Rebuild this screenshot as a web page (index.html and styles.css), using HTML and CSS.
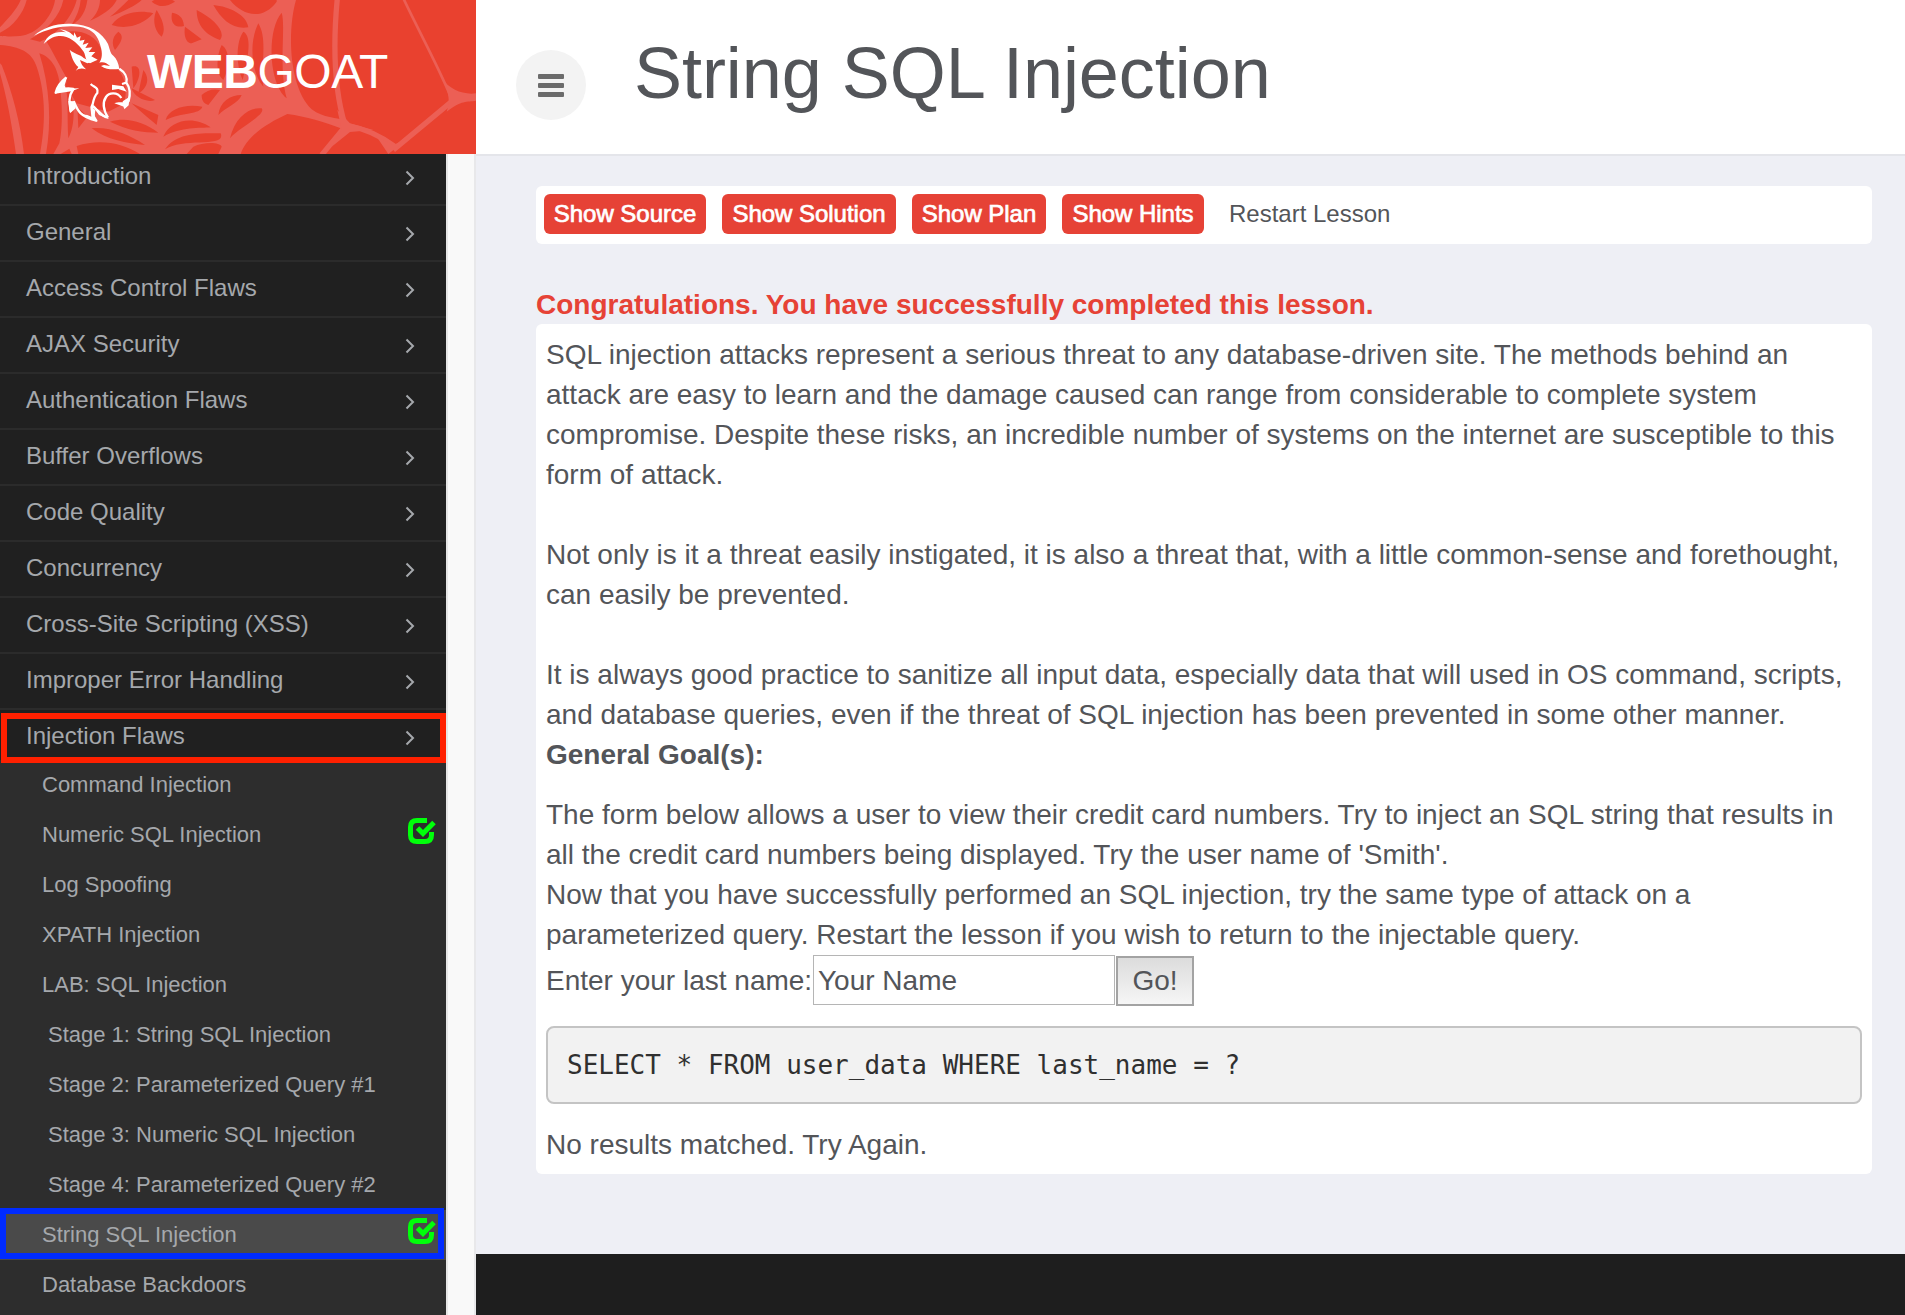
FILE: index.html
```html
<!DOCTYPE html>
<html lang="en">
<head>
<meta charset="utf-8">
<title>WebGoat - String SQL Injection</title>
<link rel="stylesheet" href="styles.css">
</head>
<body>
<div class="app">
  <header class="brand">
    <svg class="web" viewBox="0 0 1428 462" preserveAspectRatio="none" aria-hidden="true">
      <g class="strands">
        <path class="fill" d="M0 0H888C862 90 865 260 935 328C970 355 1010 352 1040 362L1030 388C970 365 920 350 862 342C800 370 740 410 722 462H0Z"/>
        <path class="strand" d="M1012 -5C1000 120 1000 260 1035 375C1090 385 1140 405 1185 440M1035 380L965 465M1180 450L1370 292"/>
        <path class="thin" d="M1210 -5C1260 100 1310 190 1350 285"/>
        <path class="fill" d="M1325 235C1350 270 1390 285 1428 280V302C1400 306 1385 300 1340 335C1350 310 1350 280 1325 235ZM1012 330L1050 370L1120 390L1050 396L995 440L1025 388ZM1130 410L1180 435L1225 415L1165 462Z"/>
      </g>
      <g class="holes">
        <path d="M0 0H62C50 30 20 60 0 82ZM80 0H165C158 50 110 104 60 108C30 111 0 108 0 108V98C40 80 70 40 80 0ZM190 0H230C215 60 160 110 120 125L90 118C140 90 180 50 190 0ZM242 0H262C258 30 245 60 215 74C230 50 240 25 242 0ZM300 0H350C340 25 300 50 270 62C290 45 300 20 300 0ZM385 0H425C410 15 370 35 330 50C350 35 370 15 385 0Z"/>
        <path d="M0 220C20 290 35 370 48 462H0ZM0 135C60 140 95 155 110 200C140 290 135 380 120 462H72C62 370 35 270 5 195L0 190ZM118 160C150 170 175 200 180 260C190 340 185 400 178 430L160 462H138C155 370 150 260 118 160ZM192 235C232 300 225 380 205 415C200 350 208 290 192 235ZM232 320L262 350L235 385ZM182 462L208 446L215 462Z"/>
        <path d="M135 118C200 80 280 85 305 150L350 205C385 240 380 290 370 312L325 335L230 310L205 270L195 225C170 180 150 140 135 118Z"/>
        <path d="M335 75C365 35 420 30 460 40C430 75 380 90 335 75ZM345 150C370 120 370 105 355 95C335 110 335 135 345 150ZM455 5C480 25 500 20 525 5C510 -8 470 -8 455 5ZM470 30C455 60 465 95 485 110C500 85 485 55 470 30ZM516 38C510 70 525 85 552 78C550 50 535 42 516 38ZM590 30C590 80 620 105 660 120C680 95 640 55 590 30ZM640 15C665 60 700 90 745 82C740 45 690 20 640 15ZM690 0C730 50 790 60 830 5V0ZM555 80C550 110 560 130 575 130L605 118Z"/>
        <path d="M665 135C690 150 690 200 670 240C645 220 650 165 665 135ZM730 95C760 110 740 190 728 240C705 190 710 120 730 95ZM775 70C805 120 780 200 790 260C755 220 745 130 775 70ZM845 38C858 80 835 200 860 295C805 250 800 90 845 38ZM395 200C430 190 420 240 400 265ZM430 210C455 240 435 270 415 280Z"/>
        <path d="M497 360C505 325 560 310 607 320C600 345 545 335 497 360ZM490 410C510 360 580 345 632 382C600 385 545 380 490 410ZM495 448C530 395 610 400 662 400C680 445 550 410 495 448ZM605 285C620 270 640 265 660 270L625 315C610 310 605 300 605 285ZM655 345C660 305 690 285 725 285C715 310 680 320 655 345ZM690 415C705 350 750 320 785 325C800 345 720 380 690 415Z"/>
        <path d="M395 310L475 345L470 375C440 350 410 325 395 310ZM330 365C380 350 430 365 475 398C430 398 380 390 330 365ZM275 385C330 380 390 405 435 435C380 430 320 420 275 385ZM230 438C300 415 370 430 420 462H235ZM395 265L465 300C440 310 400 290 395 265ZM580 440C610 425 660 425 665 440L655 462H560Z"/>
      </g>
      <g class="goat">
        <path d="M102 107C128 84 165 70 210 71C268 72 308 98 324 132C331 151 330 160 340 167C350 176 356 190 358 207C342 208 322 211 303 198L312 195L330 198C320 190 312 184 298 188C307 174 307 160 303 143C296 113 285 96 260 86C222 72 158 78 102 107Z"/>
        <path d="M131 132C142 104 166 92 198 97L180 88C202 90 216 102 221 108L223 97L231 113L242 108L239 122L254 119L248 134L266 128L256 144L277 142L266 156L286 156L274 169L293 179L270 190C252 180 260 164 247 150C228 122 198 103 171 109C151 113 142 123 131 132Z"/>
        <path d="M209 149C222 162 241 163 251 174L275 186L262 190L240 180C243 191 248 199 258 208C246 204 236 205 227 213L235 201C220 188 215 170 209 149Z"/>
        <path class="line" d="M358 206C374 216 383 232 379 248L366 252M379 248C391 264 391 284 386 303L375 312L374 323M364 294C352 275 327 277 318 291C306 309 312 333 324 353M199 232C184 244 171 258 167 278C181 268 199 263 220 267C203 292 209 313 212 335M221 304C233 332 240 350 289 362C275 343 275 329 276 316C292 326 298 349 324 353M272 252C283 263 296 262 292 279C281 290 280 303 276 322"/>
        <path d="M165 281L180 250L202 230L194 256L197 266L238 265L214 274ZM210 340L205 303L223 304L227 325ZM290 365L243 343L262 345L274 350L271 318L286 330L284 348ZM328 357L297 345L279 317L299 332L312 345ZM373 328L368 304L389 290L386 316ZM336 254L370 259L380 275L355 267L336 270ZM343 310C358 303 367 309 379 306L372 320Z"/>
      </g>
    </svg>
    <h2 class="wordmark"><b>WEB</b><span>GOAT</span></h2>
  </header>

  <header class="topbar">
    <button class="toggle" aria-label="Toggle menu"><i></i><i></i><i></i></button>
    <h1>String SQL Injection</h1>
  </header>

  <nav class="sidebar">
    <ul class="menu">
      <li><a>Introduction<svg class="chev" viewBox="0 0 10 16"><path d="M1.5 1.5L8 8L1.5 14.5"/></svg></a></li>
      <li><a>General<svg class="chev" viewBox="0 0 10 16"><path d="M1.5 1.5L8 8L1.5 14.5"/></svg></a></li>
      <li><a>Access Control Flaws<svg class="chev" viewBox="0 0 10 16"><path d="M1.5 1.5L8 8L1.5 14.5"/></svg></a></li>
      <li><a>AJAX Security<svg class="chev" viewBox="0 0 10 16"><path d="M1.5 1.5L8 8L1.5 14.5"/></svg></a></li>
      <li><a>Authentication Flaws<svg class="chev" viewBox="0 0 10 16"><path d="M1.5 1.5L8 8L1.5 14.5"/></svg></a></li>
      <li><a>Buffer Overflows<svg class="chev" viewBox="0 0 10 16"><path d="M1.5 1.5L8 8L1.5 14.5"/></svg></a></li>
      <li><a>Code Quality<svg class="chev" viewBox="0 0 10 16"><path d="M1.5 1.5L8 8L1.5 14.5"/></svg></a></li>
      <li><a>Concurrency<svg class="chev" viewBox="0 0 10 16"><path d="M1.5 1.5L8 8L1.5 14.5"/></svg></a></li>
      <li><a>Cross-Site Scripting (XSS)<svg class="chev" viewBox="0 0 10 16"><path d="M1.5 1.5L8 8L1.5 14.5"/></svg></a></li>
      <li><a>Improper Error Handling<svg class="chev" viewBox="0 0 10 16"><path d="M1.5 1.5L8 8L1.5 14.5"/></svg></a></li>
      <li class="open"><a>Injection Flaws<svg class="chev" viewBox="0 0 10 16"><path d="M1.5 1.5L8 8L1.5 14.5"/></svg></a></li>
    </ul>
    <ul class="lessons">
      <li>Command Injection</li>
      <li>Numeric SQL Injection<svg class="done" viewBox="0 0 28 27"><path d="M19 2.5H9Q2.5 2.5 2.5 9V17Q2.5 23.5 9 23.5H17Q23.5 23.5 23.5 17V14"/><path d="M9.5 10L15 15.5L26 4.5"/></svg></li>
      <li>Log Spoofing</li>
      <li>XPATH Injection</li>
      <li>LAB: SQL Injection</li>
      <li class="stage">Stage 1: String SQL Injection</li>
      <li class="stage">Stage 2: Parameterized Query #1</li>
      <li class="stage">Stage 3: Numeric SQL Injection</li>
      <li class="stage">Stage 4: Parameterized Query #2</li>
      <li class="current">String SQL Injection<svg class="done" viewBox="0 0 28 27"><path d="M19 2.5H9Q2.5 2.5 2.5 9V17Q2.5 23.5 9 23.5H17Q23.5 23.5 23.5 17V14"/><path d="M9.5 10L15 15.5L26 4.5"/></svg></li>
      <li>Database Backdoors</li>
    </ul>
  </nav>

  <main class="content">
    <div class="toolbar">
      <button>Show Source</button>
      <button>Show Solution</button>
      <button>Show Plan</button>
      <button>Show Hints</button>
      <a>Restart Lesson</a>
    </div>
    <div class="feedback">Congratulations. You have successfully completed this lesson.</div>
    <section class="lesson">
      <p>SQL injection attacks represent a serious threat to any database-driven site. The methods behind an<br>attack are easy to learn and the damage caused can range from considerable to complete system<br>compromise. Despite these risks, an incredible number of systems on the internet are susceptible to this<br>form of attack.<br><br>Not only is it a threat easily instigated, it is also a threat that, with a little common-sense and forethought,<br>can easily be prevented.<br><br>It is always good practice to sanitize all input data, especially data that will used in OS command, scripts,<br>and database queries, even if the threat of SQL injection has been prevented in some other manner.<br><b>General Goal(s):</b></p>
      <p class="goal">The form below allows a user to view their credit card numbers. Try to inject an SQL string that results in<br>all the credit card numbers being displayed. Try the user name of 'Smith'.<br>Now that you have successfully performed an SQL injection, try the same type of attack on a<br>parameterized query. Restart the lesson if you wish to return to the injectable query.</p>
      <form class="query">
        <label for="name">Enter your last name:</label><input id="name" type="text" value="Your Name"><button type="button">Go!</button>
      </form>
      <pre>SELECT * FROM user_data WHERE last_name = ?</pre>
      <p class="result">No results matched. Try Again.</p>
    </section>
  </main>

  <footer class="footer"></footer>
</div>
</body>
</html>
```
FILE: styles.css
```css
* { box-sizing: border-box; }

body {
  margin: 0;
  font-family: "Liberation Sans", Arial, sans-serif;
  color: #535559;
  background: #eeeff5;
}

ul { margin: 0; padding: 0; list-style: none; }

.app {
  display: grid;
  grid-template-columns: 476px 1fr;
  grid-template-rows: 154px 1100px 61px;
  width: 1905px;
  height: 1315px;
  overflow: hidden;
}

/* Brand */
.brand {
  position: relative;
  background: #e9412f;
  padding: 39px 0 0 147px;
}
.web { position: absolute; left: 0; top: 0; width: 476px; height: 154px; }
.strands path { fill: none; stroke: #ec5f55; }
.strands .fill { fill: #ec5f55; stroke: none; }
.strand { stroke-width: 16; }
.thin { stroke-width: 8; }
.holes path { fill: #e9412f; }
.goat path { fill: #fff; }
.goat .line { fill: none; stroke: #fff; stroke-width: 7; stroke-linejoin: round; }
.wordmark {
  position: relative;
  margin: 0;
  color: #fff;
  font-size: 48px;
  line-height: 66px;
  font-weight: 400;
  letter-spacing: -.5px;
  white-space: nowrap;
}

/* Top bar */
.topbar {
  display: flex;
  align-items: flex-start;
  background: #fff;
  padding-left: 40px;
}
.toggle {
  display: flex;
  flex-direction: column;
  align-items: center;
  justify-content: center;
  gap: 4px;
  width: 70px;
  height: 70px;
  margin-top: 50px;
  padding: 0;
  border: 0;
  border-radius: 50%;
  background: #f3f3f3;
}
.toggle i { width: 26px; height: 5px; border-radius: 1px; background: #6b6b6b; }
h1 {
  margin: 32px 0 0 48px;
  font-size: 72px;
  line-height: 82px;
  font-weight: 400;
  letter-spacing: -.05px;
  white-space: nowrap;
}

/* Sidebar */
.sidebar {
  grid-row: 2 / 4;
  border-right: 2px solid #e8e8ea;
  background: linear-gradient(90deg, #e6e6e6 448px, #f9f9f9 448px);
  overflow: hidden;
}
.menu, .lessons { width: 446px; color: #a5a8ac; }
.menu { background: #202020; }
.menu li { height: 56px; border-bottom: 2px solid #2b2b2b; }
.menu li:first-child { height: 52px; }
.menu a {
  display: flex;
  align-items: center;
  justify-content: space-between;
  height: 51px;
  padding: 0 31px 0 26px;
  font-size: 24px;
}
.menu li:first-child a { height: 43px; }
.chev { width: 10px; height: 16px; margin-top: 5px; }
.chev path { fill: none; stroke: #a5a8ac; stroke-width: 2; }
.menu .open {
  position: relative;
  height: 50px;
  border: 0;
}
.menu .open::after, .current::after {
  content: "";
  position: absolute;
  inset: 3px 0 -3px 1px;
  border: 6px solid #ff2000;
}
.lessons { background: #2d2d2d; height: 555px; font-size: 22px; }
.lessons li {
  display: flex;
  align-items: center;
  justify-content: space-between;
  height: 50px;
  padding: 0 10px 0 42px;
}
.lessons .stage { padding-left: 48px; }
.lessons .current { position: relative; background: #4a4a4a; }
.lessons .current::after { inset: -2px 2px 1px 0; border-color: #002bff; }
.done { width: 28px; height: 27px; margin-top: -7px; }
.done path { fill: none; stroke: #00ff0a; stroke-width: 5; }

/* Lesson content */
.content {
  padding: 30px 33px 0 60px;
  border-top: 2px solid #e4e5ea;
}
.toolbar {
  display: flex;
  gap: 16px;
  height: 58px;
  padding: 8px;
  border-radius: 6px;
  background: #fff;
  font-size: 24px;
  line-height: 40px;
}
.toolbar button {
  width: 162px;
  height: 40px;
  padding: 0;
  border: 0;
  border-radius: 6px;
  background: #e64236;
  color: #fff;
  font: inherit;
  letter-spacing: -.03px;
  -webkit-text-stroke: .7px #fff;
  white-space: nowrap;
}
.toolbar button:nth-child(2) { width: 174px; }
.toolbar button:nth-child(3) { width: 134px; }
.toolbar button:nth-child(4) { width: 142px; }
.toolbar a { margin-left: 9px; }
.feedback {
  margin-top: 40px;
  height: 40px;
  font-size: 28px;
  line-height: 42px;
  font-weight: 700;
  color: #e64236;
}
.lesson {
  height: 850px;
  padding: 11px 10px 10px;
  border-radius: 6px;
  background: #fff;
  font-size: 28px;
  line-height: 40px;
  white-space: nowrap;
}
.lesson p { margin: 0; }
.lesson .goal { margin-top: 20px; }
.query { display: flex; }
.query label { width: 267px; line-height: 52px; height: 50px; }
.query input {
  width: 302px;
  height: 50px;
  padding: 3px 4px 1px;
  border: 1px solid #b5b5b5;
  color: inherit;
  font: inherit;
}
.query button {
  width: 78px;
  height: 50px;
  margin: 1px 0 0 1px;
  padding: 0;
  border: 2px solid #a3a3a3;
  background: linear-gradient(#dcdcdc, #f6f6f6);
  color: inherit;
  font: inherit;
}
.lesson pre {
  height: 78px;
  margin: 20px 0;
  padding: 18px 19px;
  border: 2px solid #c4c4c4;
  border-radius: 8px;
  background: #f2f2f2;
  color: #303030;
  font-family: "DejaVu Sans Mono", monospace;
  font-size: 26px;
  line-height: 38px;
}
.lesson .result { line-height: 42px; }
.footer { background: #1e1e1e; }
```
